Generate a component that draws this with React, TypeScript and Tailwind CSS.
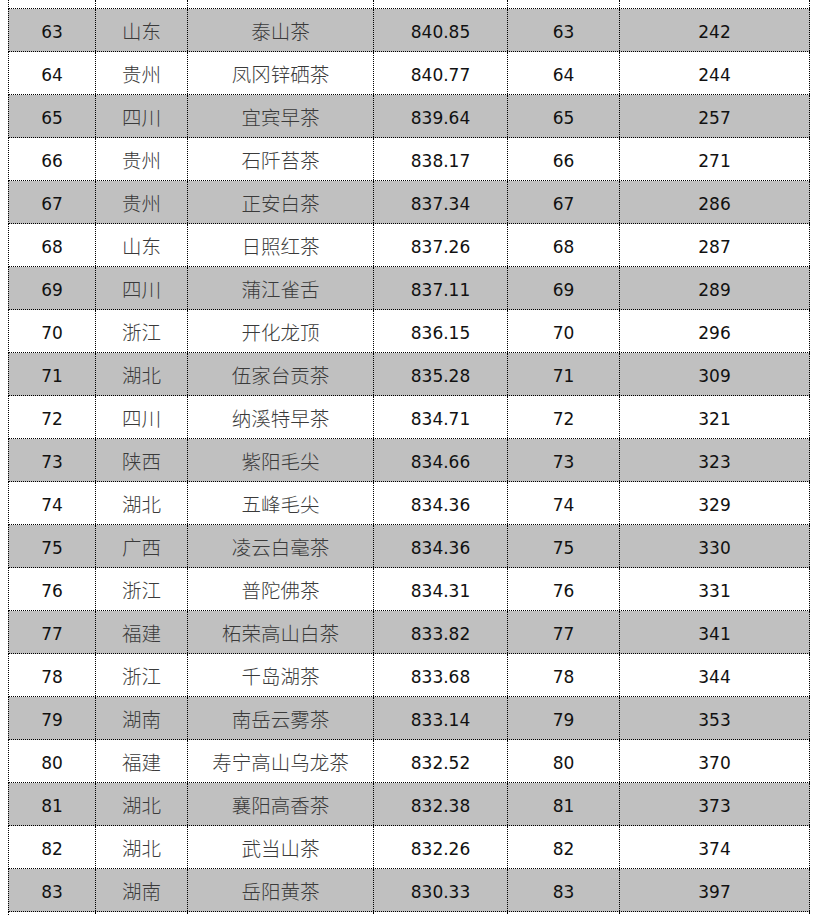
const rows: [number, string, string, string, number, number][] = [
  [63, "山东", "泰山茶", "840.85", 63, 242],
  [64, "贵州", "凤冈锌硒茶", "840.77", 64, 244],
  [65, "四川", "宜宾早茶", "839.64", 65, 257],
  [66, "贵州", "石阡苔茶", "838.17", 66, 271],
  [67, "贵州", "正安白茶", "837.34", 67, 286],
  [68, "山东", "日照红茶", "837.26", 68, 287],
  [69, "四川", "蒲江雀舌", "837.11", 69, 289],
  [70, "浙江", "开化龙顶", "836.15", 70, 296],
  [71, "湖北", "伍家台贡茶", "835.28", 71, 309],
  [72, "四川", "纳溪特早茶", "834.71", 72, 321],
  [73, "陕西", "紫阳毛尖", "834.66", 73, 323],
  [74, "湖北", "五峰毛尖", "834.36", 74, 329],
  [75, "广西", "凌云白毫茶", "834.36", 75, 330],
  [76, "浙江", "普陀佛茶", "834.31", 76, 331],
  [77, "福建", "柘荣高山白茶", "833.82", 77, 341],
  [78, "浙江", "千岛湖茶", "833.68", 78, 344],
  [79, "湖南", "南岳云雾茶", "833.14", 79, 353],
  [80, "福建", "寿宁高山乌龙茶", "832.52", 80, 370],
  [81, "湖北", "襄阳高香茶", "832.38", 81, 373],
  [82, "湖北", "武当山茶", "832.26", 82, 374],
  [83, "湖南", "岳阳黄茶", "830.33", 83, 397],
];

const num = "font-['DejaVu_Sans',sans-serif] text-[17px] text-[#111] pt-[5px]";
const zh = "font-['Noto_Sans_CJK_SC',sans-serif] font-light text-[19.5px] text-[#3a3a3a] pt-[2px]";
const cell = "flex items-center justify-center border-r border-dotted border-black";

function Row({ r, gray }: { r?: (typeof rows)[number]; gray?: boolean }) {
  return (
    <div
      className={`flex h-[43px] w-[802px] border-b border-l border-dotted border-black ${gray ? "bg-[#c0c0c0]" : "bg-white"}`}
    >
      <div className={`${cell} w-[87px] ${num}`}>{r?.[0]}</div>
      <div className={`${cell} w-[92px] ${zh}`}>{r?.[1]}</div>
      <div className={`${cell} w-[186px] ${zh}`}>{r?.[2]}</div>
      <div className={`${cell} w-[134px] ${num}`}>{r?.[3]}</div>
      <div className={`${cell} w-[112px] ${num}`}>{r?.[4]}</div>
      <div className={`${cell} w-[190px] ${num}`}>{r?.[5]}</div>
    </div>
  );
}

export default function App() {
  return (
    <div className="h-[915px] w-[820px] overflow-hidden bg-white pl-[8px]">
      <div className="flex h-[9px] w-[802px] border-b border-l border-dotted border-black">
        <div className="w-[87px] border-r border-dotted border-black" />
        <div className="w-[92px] border-r border-dotted border-black" />
        <div className="w-[186px] border-r border-dotted border-black" />
        <div className="w-[134px] border-r border-dotted border-black" />
        <div className="w-[112px] border-r border-dotted border-black" />
        <div className="w-[190px] border-r border-dotted border-black" />
      </div>
      {rows.map((r, i) => (
        <Row key={r[0]} r={r} gray={i % 2 === 0} />
      ))}
      <Row />
    </div>
  );
}
